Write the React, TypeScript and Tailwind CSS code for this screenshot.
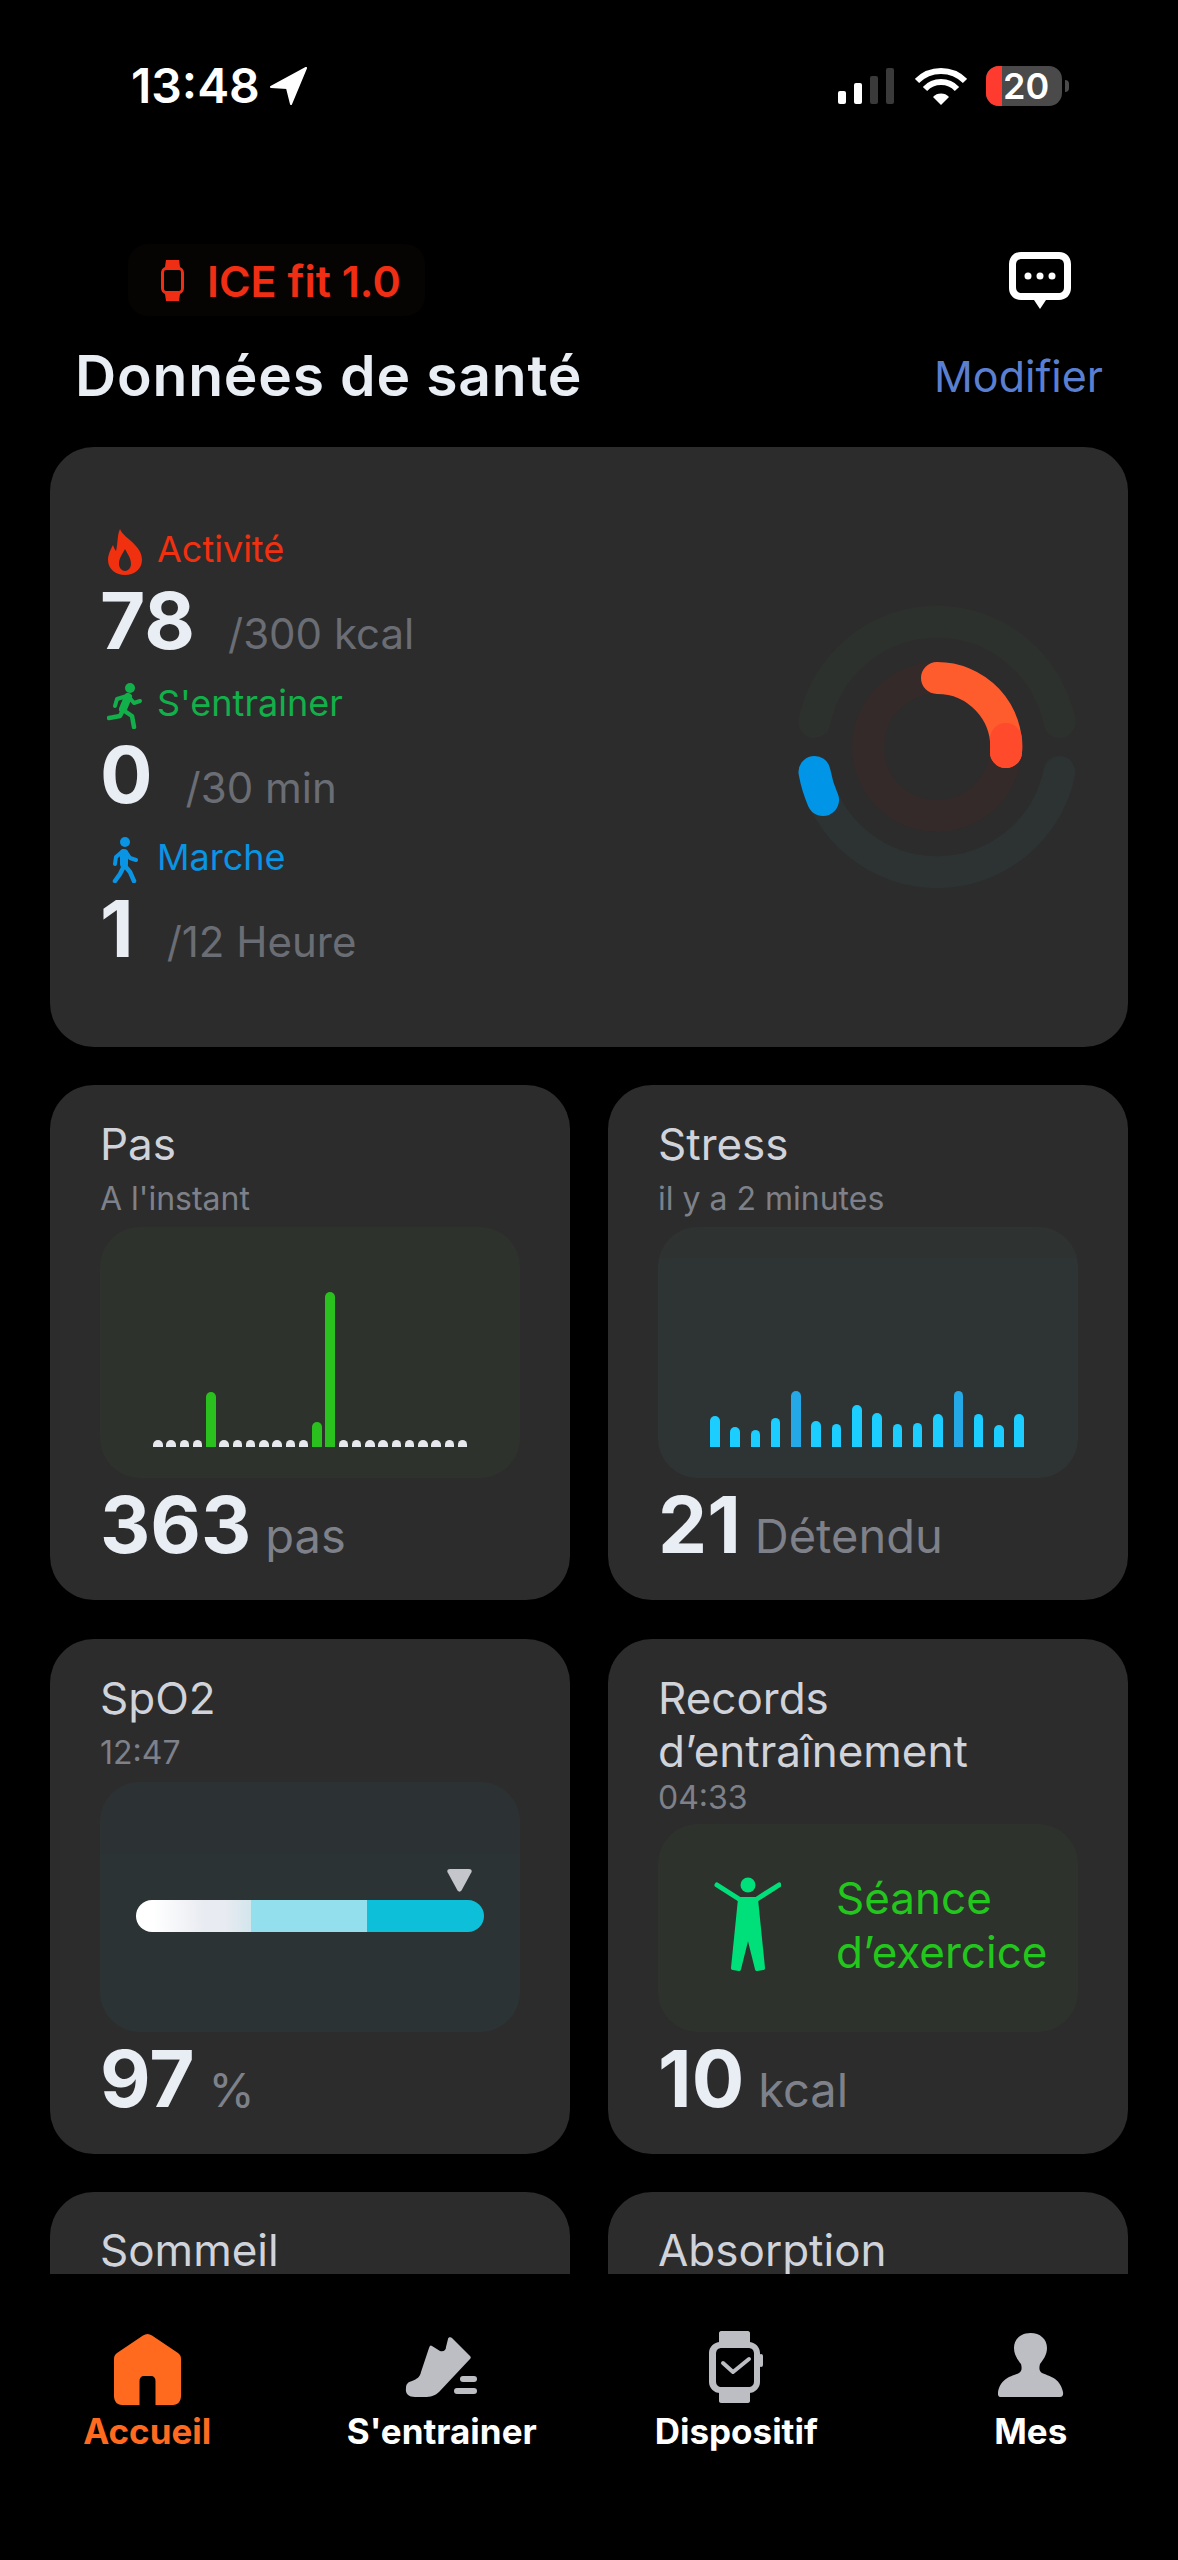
import React from "react";

const stepBars = [0, 0, 0, 0, 55, 0, 0, 0, 0, 0, 0, 0, 25, 155, 0, 0, 0, 0, 0, 0, 0, 0, 0, 0];
const stressBars = [31, 20, 17, 29, 56, 26, 23, 42, 34, 23, 24, 33, 56, 33, 22, 33];

function Flame() {
  return (
    <svg width="34" height="46" viewBox="0 0 34 46">
      <path
        fill="#f0300f"
        fillRule="evenodd"
        d="M12 0C14 6 21 9 27 16C32 21 34 26 34 31C34 40 26 46 17 46C8 46 0 40 0 31C0 25 3 20 5 16C6 19 7 21 8 22C10 15 9 6 12 0ZM17 20C14 26 11 29 11 35C11 39 14 42 17 42C20 42 23 39 23 35C23 29 20 26 17 20Z"
      />
    </svg>
  );
}

function Runner() {
  return (
    <svg width="36" height="46" viewBox="0 0 36 46" fill="none" stroke="#12b04a" strokeLinecap="round" strokeLinejoin="round">
      <circle cx="23" cy="5" r="5" fill="#12b04a" stroke="none" />
      <path d="M21 14L16 26" strokeWidth="8" />
      <path d="M21 13L27 20L33 18" strokeWidth="4" />
      <path d="M20 13L10 16L8 23" strokeWidth="4" />
      <path d="M16 27L13 33L2 35" strokeWidth="4.5" />
      <path d="M16 27L25 33L27 44" strokeWidth="4.5" />
    </svg>
  );
}

function Walker() {
  return (
    <svg width="26" height="46" viewBox="0 0 26 46" fill="none" stroke="#0a94e4" strokeLinecap="round" strokeLinejoin="round">
      <circle cx="13" cy="5" r="5" fill="#0a94e4" stroke="none" />
      <path d="M12 16V27" strokeWidth="8" />
      <path d="M11 14L4 20L3 27" strokeWidth="4" />
      <path d="M14 15L18 21L24 23" strokeWidth="4" />
      <path d="M12 29L8 37L3 44" strokeWidth="4.5" />
      <path d="M13 29L18 35L22 44" strokeWidth="4.5" />
    </svg>
  );
}

function ActivityRing() {
  const c = 160;
  return (
    <svg width="320" height="320" viewBox="0 0 320 320" fill="none" strokeLinecap="round" strokeWidth="32">
      <circle cx={c} cy={c} r="69" stroke="#342a2a" />
      <path d="M37.5 135A125 125 0 0 1 282.5 135" stroke="#2d312d" />
      <path d="M37.5 185A125 125 0 0 0 282.5 185" stroke="#2d3232" />
      <path d="M37.5 185A125 125 0 0 0 46 213" stroke="#0095e6" />
      <path d="M160 91A69 69 0 0 1 229 165" stroke="#ff5c2e" />
      <path d="M229 152A69 69 0 0 1 229 165" stroke="#ff4a2c" />
    </svg>
  );
}

function ActivityRow({ icon, label, color, value, goal }: { icon: React.ReactNode; label: string; color: string; value: string; goal: string }) {
  return (
    <div className="flex flex-col mb-[25px]">
      <div className="flex items-center h-[46px]">
        <div className="w-[44px] flex justify-center">{icon}</div>
        <span className={`ml-[10px] -mt-[6px] text-[36px] leading-[46px] ${color}`}>{label}</span>
      </div>
      <div className="flex items-baseline mt-[9px] h-[74px] -ml-[3px]">
        <span className="text-[78px] leading-[74px] font-bold text-[#e9edf4]">{value}</span>
        <span className="ml-[33px] text-[42px] text-[#6a6d74]">{goal}</span>
      </div>
    </div>
  );
}

function Card({ title, sub, chart, value, unit, tight }: { title: React.ReactNode; sub: string; chart: React.ReactNode; value: string; unit: string; tight?: boolean }) {
  return (
    <div className="h-[515px] rounded-[44px] bg-[#2c2c2c] px-[50px] pt-[33px] flex flex-col">
      <div className="text-[44px] leading-[53px] text-[#d0d3da]">{title}</div>
      <div className={`text-[32px] leading-[36px] text-[#7e8189] ${tight ? "mt-[2px]" : "mt-[10px]"}`}>{sub}</div>
      {chart}
      <div className="flex items-baseline h-[74px] mt-[10px] mb-[38px]">
        <span className="text-[78px] leading-[74px] font-bold text-[#e9edf4]">{value}</span>
        <span className="ml-[14px] text-[47px] text-[#7e8189]">{unit}</span>
      </div>
    </div>
  );
}

// cards cut by the tab bar: only the title row shows
function FoldCard({ title }: { title: string }) {
  return (
    <div className="h-[82px] rounded-t-[44px] bg-[#2c2c2c] px-[50px] pt-[34px]">
      <div className="text-[44px] leading-[48px] text-[#d0d3da]">{title}</div>
    </div>
  );
}

function StepsChart() {
  return (
    <div className="mt-[10px] flex-1 rounded-[40px] bg-[#2e322d] flex items-end gap-[3.75px] pl-[53px] pb-[31px]">
      {stepBars.map((h, i) =>
        h > 0 ? (
          <div key={i} className="w-[9.5px] rounded-t-full bg-[#2ac11e]" style={{ height: h }} />
        ) : (
          <div key={i} className="w-[9.5px] h-[7.5px] rounded-t-full bg-[#e6e8ee]" />
        )
      )}
    </div>
  );
}

function StressChart() {
  return (
    <div className="mt-[10px] flex-1 rounded-[40px] bg-[linear-gradient(#2e3230_31px,#2e3434_31px)] flex items-end gap-[10.8px] pl-[52px] pb-[31px]">
      {stressBars.map((h, i) => (
        <div key={i} className={`w-[9.5px] rounded-t-full ${h > 50 ? "bg-[#25a8e6]" : "bg-[#1ccdff]"}`} style={{ height: h }} />
      ))}
    </div>
  );
}

function SpoChart() {
  return (
    <div className="mt-[11px] flex-1 rounded-[40px] bg-[linear-gradient(#2c3233_72px,#2b3335_72px)] flex flex-col pt-[87px] px-[36px]">
      <div className="flex justify-end pr-[12px]">
        <svg width="25" height="23" viewBox="0 0 25 23">
          <path d="M3 0H22C24.5 0 25.5 2 24 4L14.5 21.5C13.5 23 11.5 23 10.5 21.5L1 4C-0.5 2 0.5 0 3 0Z" fill="#c4c6cc" />
        </svg>
      </div>
      <div className="mt-[8px] h-[32px] rounded-full overflow-hidden flex">
        <div className="w-[115px] bg-[linear-gradient(90deg,#ffffff_15%,#e8ebf1_60%,#e8ebf1_78%,#d2e6ec_100%)]" />
        <div className="w-[116px] bg-[#93dfee]" />
        <div className="flex-1 bg-[#0dbfd9]" />
      </div>
    </div>
  );
}

function ExerciseChart() {
  return (
    <div className="mt-[8px] flex-1 rounded-[40px] bg-[#2e322d] flex items-center pl-[56px] pb-[5px]">
      <svg width="67" height="96" viewBox="0 0 67 96" fill="none" stroke="#00e07a" strokeLinecap="round" strokeLinejoin="round">
        <circle cx="34" cy="8" r="7.5" fill="#00e07a" stroke="none" />
        <path d="M3 8L25 22M65 8L43 22" strokeWidth="5" />
        <path d="M26 22H42L49 91L43 92L34 56L25 92L19 91Z" fill="#00e07a" strokeWidth="4" />
      </svg>
      <div className="ml-[55px] text-[44px] leading-[54px] text-[#22c61c]">
        Séance
        <br />
        d’exercice
      </div>
    </div>
  );
}

function NavItem({ label, active, icon }: { label: string; active?: boolean; icon: React.ReactNode }) {
  return (
    <div className="flex flex-col items-center">
      <div className="h-[82px] flex flex-col items-center">{icon}</div>
      <span className={`text-[35px] leading-[36px] font-bold ${active ? "text-[#ff6a1f]" : "text-white"}`}>{label}</span>
    </div>
  );
}

export default function App() {
  return (
    <div className="h-[2560px] w-[1178px] bg-black flex flex-col overflow-hidden font-['Inter',sans-serif]">
      {/* status bar */}
      <div className="h-[172px] shrink-0 flex items-center justify-between pl-[131px] pr-[109px]">
        <div className="flex items-center gap-[10px]">
          <span className="text-[48px] leading-[48px] font-semibold text-white">13:48</span>
          <svg width="38" height="38" viewBox="0 0 38 38">
            <path d="M36 1L1 20L17 21L21 37Z" fill="white" stroke="white" strokeWidth="2" strokeLinejoin="round" />
          </svg>
        </div>
        <div className="flex items-center">
          <div className="flex items-end gap-[8px]">
            <div className="w-[8px] h-[13px] rounded-[2px] bg-white" />
            <div className="w-[8px] h-[21px] rounded-[2px] bg-white" />
            <div className="w-[8px] h-[28px] rounded-[2px] bg-[#3a3a3a]" />
            <div className="w-[8px] h-[36px] rounded-[2px] bg-[#3a3a3a]" />
          </div>
          <svg className="ml-[21px]" width="52" height="38" viewBox="0 0 52 38" fill="none" stroke="white" strokeWidth="6">
            <path d="M2 14A34 34 0 0 1 50 14" />
            <path d="M10 22A22 22 0 0 1 42 22" />
            <path d="M26 38L18 30A11 11 0 0 1 34 30Z" fill="white" stroke="none" />
          </svg>
          <div className="ml-[19px] w-[76px] h-[40px] rounded-[13px] bg-[#4a4a4a] flex items-center">
            <div className="w-[16px] h-full rounded-l-[13px] bg-[#ff3b30]" />
            <span className="ml-[1px] text-[36px] leading-[40px] font-semibold text-white">20</span>
          </div>
          <div className="ml-[3px] w-[4px] h-[12px] rounded-r-full bg-[#4a4a4a]" />
        </div>
      </div>

      {/* device row */}
      <div className="mt-[72px] h-[72px] shrink-0 flex items-center justify-between pl-[128px] pr-[107px]">
        <div className="h-[72px] w-[297px] rounded-[20px] bg-[#060303] flex items-center pl-[33px] gap-[23px]">
          <svg width="23" height="41" viewBox="0 0 23 41">
            <path
              fill="#f02e14"
              fillRule="evenodd"
              d="M5 0H18L19 7C21.5 8 23 10 23 13V28C23 31 21.5 33 19 34L18 41H5L4 34C1.5 33 0 31 0 28V13C0 10 1.5 8 4 7ZM5 10C3.5 10 3 11 3 12.5V28.5C3 30 3.5 31 5 31H18C19.5 31 20 30 20 28.5V12.5C20 11 19.5 10 18 10Z"
            />
          </svg>
          <span className="mt-[3px] text-[43px] leading-[43px] font-semibold text-[#f02e14]">ICE fit 1.0</span>
        </div>
        <svg width="62" height="57" viewBox="0 0 62 57">
          <path
            fill="white"
            fillRule="evenodd"
            d="M12 0H50C57 0 62 5 62 12V36C62 43 57 48 50 48H37L31 57L25 48H12C5 48 0 43 0 36V12C0 5 5 0 12 0ZM13 7C9 7 7 9 7 13V35C7 39 9 41 13 41H49C53 41 55 39 55 35V13C55 9 53 7 49 7Z"
          />
          <circle cx="19" cy="24" r="3.5" fill="white" />
          <circle cx="31" cy="24" r="3.5" fill="white" />
          <circle cx="43" cy="24" r="3.5" fill="white" />
        </svg>
      </div>

      {/* title row */}
      <div className="mt-[32px] h-[56px] shrink-0 flex items-center justify-between pl-[75px] pr-[75px]">
        <span className="text-[57px] leading-[56px] font-semibold tracking-[0.8px] text-[#e9edf4]">Données de santé</span>
        <span className="text-[43px] leading-[56px] text-[#5b7fd0]">Modifier</span>
      </div>

      {/* scrolling content */}
      <div className="mt-[43px] flex-1 min-h-0 overflow-hidden px-[50px] flex flex-col gap-[38px]">
        <div className="h-[600px] shrink-0 rounded-[44px] bg-[#2c2c2c] flex items-center justify-between pl-[53px] pr-[31px]">
          <div className="flex flex-col pt-[25px]">
            <ActivityRow icon={<Flame />} label="Activité" color="text-[#f0300f]" value="78" goal="/300 kcal" />
            <ActivityRow icon={<Runner />} label="S'entrainer" color="text-[#12b04a]" value="0" goal="/30 min" />
            <ActivityRow icon={<Walker />} label="Marche" color="text-[#0a94e4]" value="1" goal="/12 Heure" />
          </div>
          <ActivityRing />
        </div>
        <div className="grid grid-cols-2 gap-x-[38px] gap-y-[38.5px]">
          <Card title="Pas" sub="A l'instant" chart={<StepsChart />} value="363" unit="pas" />
          <Card title="Stress" sub="il y a 2 minutes" chart={<StressChart />} value="21" unit="Détendu" />
          <Card title="SpO2" sub="12:47" chart={<SpoChart />} value="97" unit="%" />
          <Card title={<>Records<br />d’entraînement</>} sub="04:33" tight chart={<ExerciseChart />} value="10" unit="kcal" />
          <FoldCard title="Sommeil" />
          <FoldCard title="Absorption" />
        </div>
      </div>

      {/* tab bar */}
      <div className="h-[286px] shrink-0 grid grid-cols-4 pt-[57px] bg-black">
        <NavItem
          label="Accueil"
          active
          icon={
            <svg className="mt-[3px]" width="67" height="71" viewBox="0 0 67 71">
              <path
                fill="#ff6a1f"
                d="M29 1.5C32 -0.5 35 -0.5 38 1.5L64 19C66 20.5 67 22 67 25V62C67 67 64 71 59 71H41.5V47C41.5 44 40 42 37 42H30C27 42 25.5 44 25.5 47V71H8C3 71 0 67 0 62V25C0 22 1 20.5 3 19Z"
              />
            </svg>
          }
        />
        <NavItem
          label="S'entrainer"
          icon={
            <svg className="mt-[6px]" width="74" height="62" viewBox="0 0 74 62" fill="#bcbec4">
              <path d="M27 9L35 14C39 15 41 13 41 10L43 2C43 0 46 0 47 1L65 19C66 20 66 21 65 22L34 55C30 59 25 60 20 60H10C4 60 0 57 1 51C1 47 3 45 7 44C12 42 15 40 16 35L24 11C25 8 26 8 27 9Z" />
              <rect x="55" y="39" width="17" height="6" rx="3" />
              <rect x="49" y="51" width="23" height="6" rx="3" />
            </svg>
          }
        />
        <NavItem
          label="Dispositif"
          icon={
            <svg width="55" height="73" viewBox="0 0 55 73">
              <path d="M10 2C10 1 11 0 12 0H39C40 0 41 1 41 2V12H10ZM10 61H41V70C41 71 40 72 39 72H12C11 72 10 71 10 70Z" fill="#bcbec4" />
              <path
                fill="#bcbec4"
                fillRule="evenodd"
                d="M11 11H40C46 11 51 16 51 22V51C51 57 46 62 40 62H11C5 62 0 57 0 51V22C0 16 5 11 11 11ZM13 17C9 17 7 19 7 23V50C7 54 9 56 13 56H39C43 56 45 54 45 50V23C45 19 43 17 39 17Z"
              />
              <rect x="50" y="23" width="4" height="13" rx="2" fill="#bcbec4" />
              <path d="M14 32L24 41L40 28" fill="none" stroke="#bcbec4" strokeWidth="4" strokeLinecap="round" strokeLinejoin="round" />
            </svg>
          }
        />
        <NavItem
          label="Mes"
          icon={
            <svg className="mt-[1px]" width="66" height="65" viewBox="0 0 66 65">
              <path
                fill="#bcbec4"
                d="M32.5 1C42 1 49 7 49 16C49 23 45 28 42 32C41 36 41 39 44 41C50 44 62 45 65 60C65.5 63 64.5 65 62 65H3C0.5 65 -0.5 63 0 60C3 45 15 44 21 41C24 39 24 36 23 32C20 28 16 23 16 16C16 7 23 1 32.5 1Z"
              />
            </svg>
          }
        />
      </div>
    </div>
  );
}
